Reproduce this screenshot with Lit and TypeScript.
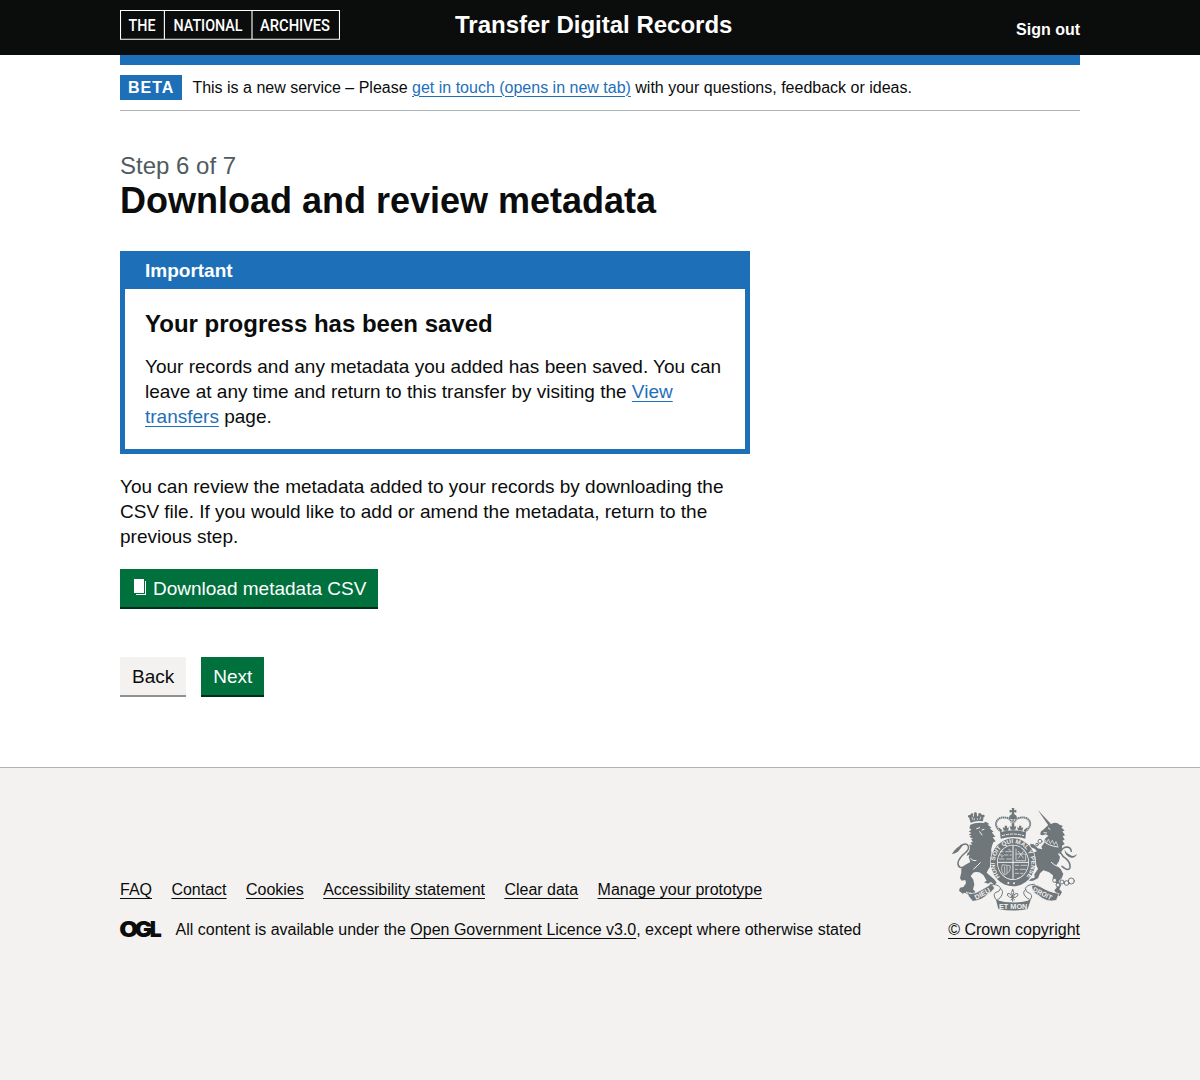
import { LitElement, html, css } from "lit";
import { customElement } from "lit/decorators.js";

const FOOTER_LINKS = [
  "FAQ",
  "Contact",
  "Cookies",
  "Accessibility statement",
  "Clear data",
  "Manage your prototype",
];

@customElement("archives-logo")
class ArchivesLogo extends LitElement {
  static styles = css`
    :host { display: block; width: 220px; height: 30px; }
    .logo { display: block; }
    .word {
      font-family: Roboto, "Liberation Sans", sans-serif;
      font-weight: 500;
      font-size: 16.5px;
      fill: #fff;
    }
    .frame { fill: none; stroke: #fff; stroke-width: 1.1; }
  `;

  render() {
    return html`<svg class="logo" width="220" height="30" viewBox="0 0 220 30" role="img" aria-label="The National Archives">
      <path class="frame" d="M.5 .5H219.5V29.3H.5ZM44.4 .5V29.3M132 .5V29.3" />
      <text class="word" x="8.5" y="21" textLength="27" lengthAdjust="spacingAndGlyphs">THE</text>
      <text class="word" x="53.5" y="21" textLength="69" lengthAdjust="spacingAndGlyphs">NATIONAL</text>
      <text class="word" x="140" y="21" textLength="70" lengthAdjust="spacingAndGlyphs">ARCHIVES</text>
    </svg>`;
  }
}

@customElement("royal-crest")
class RoyalCrest extends LitElement {
  static styles = css`
    :host { display: block; width: 145px; height: 115px; }
    .crest { display: block; }
    .solid { fill: #6f777b; }
    .paper { fill: #f3f2f1; }
    .line { fill: none; stroke: #6f777b; stroke-width: 4.5; stroke-linecap: round; stroke-linejoin: round; }
    .thin { stroke-width: 3; }
    .gap { fill: none; stroke: #f3f2f1; stroke-width: 3; stroke-linecap: round; }
    .fine { stroke-width: 2; }
    .motto { font-family: "Liberation Sans", Arial, sans-serif; font-weight: 700; fill: #f3f2f1; }
    .ribbon-text { font-size: 21px; }
    .garter-text { font-size: 18px; }
  `;

  render() {
    return html`<svg class="crest" width="145" height="115" viewBox="0 0 435 345" aria-hidden="true">
      <!-- lion -->
      <path class="solid" d="M92 68L86 48 94 43 101 51 104 38H109L112 50 119 41 131 46 129 64Q110 60 92 68Z" />
      <g class="solid">
        <circle cx="88" cy="49" r="4" /><circle cx="106" cy="41" r="4" /><circle cx="130" cy="48" r="4" />
        <circle cx="96" cy="44" r="4" /><circle cx="119" cy="43" r="4" />
        <path d="M91 74Q108 66 130 69L137 65 148 72 143 74 155 83 149 84 161 96 155 97 166 110 158 112 167 124 160 127 156 138Q151 150 155 164L152 190Q151 204 144 210L140 218 154 230 164 239 170 248 163 254 153 246 144 251 132 247 140 242 130 225 118 217Q105 214 100 218L92 228 100 239 103 254 99 268 106 275 101 284 90 277 83 283 74 278 68 281 57 272 60 263 70 261 78 250 76 240 65 242 60 235 64 216Q61 204 75 195L91 186 86 171 91 162 87 157 90 143 88 133 96 136 92 126 99 127 93 117 100 116 88 111 95 106 86 105 94 98 86 95 94 89 88 84Z" />
        <path d="M128 150Q112 156 95 151L83 158 80 168 88 164 91 175 99 165 111 168 125 165Z" />
        <path d="M36 162Q48 141 70 133Q62 147 55 154Q45 163 36 162Z" />
      </g>
      <path class="gap fine" d="M96 52L99 60M103 55V59M112 55V59M122 51L120 58" />
      <path class="line" d="M62 137Q80 126 85 139Q88 149 75 159Q57 174 54 188Q54 210 78 199" />
      <path class="gap" d="M110 86L119 83M126 90L132 88M119 95L126 105M101 207Q112 198 121 188M92 176Q98 184 108 182" />

      <!-- unicorn -->
      <g class="solid">
        <path d="M293 29L331 70 325 76Z" />
        <path d="M324 76L326 67 333 72Q349 64 359 74L369 78 364 82 374 92 367 94 375 106 368 109 374 119 367 122 374 132 366 137Q369 151 354 162L360 170 357 184 349 196 362 207 370 222 365 235 356 244 363 256 358 268 366 276 359 289 350 282 343 271 350 263 348 250 338 238 339 226 326 216 310 211 300 220 294 235 279 242 267 243 272 236 284 233 283 223 294 207 289 196 286 177 280 166 275 158 268 159 266 148 276 149 282 157 291 154 284 146 271 141 271 131 281 133 293 145 307 148 304 140 312 130 314 117 325 107 316 103 309 106 301 104 302 95 313 86Z" />
        <path d="M373 150Q380 161 392 166Q400 171 411 162Q405 175 394 173Q376 170 373 150Z" />
      </g>
      <path class="line" d="M360 160Q366 142 380 141Q392 141 394 154M363 160Q368 170 378 176Q392 188 390 203Q385 216 366 199" />
      <path class="gap" d="M312 98L320 99M325 84L330 88M310 123Q326 138 354 141M352 199Q342 195 334 187" />
      <path class="gap fine" d="M313 117L320 128 325 118 331 131 337 121 343 134 348 125 353 137" />
      <g class="line thin">
        <circle cx="300" cy="124" r="6" /><circle cx="291" cy="134" r="4" />
        <circle class="paper" cx="344" cy="241" r="6" /><circle class="paper" cx="354" cy="255" r="6" />
        <circle cx="366" cy="246" r="6" /><circle cx="380" cy="249" r="7" /><circle cx="394" cy="243" r="9" />
      </g>

      <!-- garter and shield -->
      <ellipse class="paper" cx="219" cy="187" rx="69" ry="75" />
      <ellipse class="solid" cx="219" cy="187" rx="67" ry="72" />
      <ellipse class="paper" cx="219" cy="187" rx="48" ry="53" />
      <ellipse class="solid" cx="219" cy="187" rx="45.5" ry="50.5" />
      <path class="gap" d="M219 137V237M174 187H264" />
      <path class="gap fine" d="M181 155H189M197 155H214M178 165H186M194 165H204M210 165H214M178 177H192M200 177H214M228 147V182H257V162H228M235 154L250 174M250 154L235 174M226 196H236M243 196H261M226 208H232M240 208H257M226 220H236M242 220H249M187 195Q180 212 193 225Q212 218 211 199ZM194 200V220M201 200V219M184 171L190 167M206 148L211 151" />
      <defs>
        <path id="garter" d="M180 231A54.5 59.5 0 1 1 258 231" />
      </defs>
      <text class="motto garter-text" textLength="268" lengthAdjust="spacingAndGlyphs"><textPath href="#garter">HONI SOIT QUI MAL Y PENSE</textPath></text>
      <circle class="paper" cx="205" cy="249" r="3" /><circle class="paper" cx="222" cy="250" r="3" />

      <!-- crown -->
      <path class="paper" d="M180 116L181 99Q165 88 166 70Q171 48 193 50Q212 49 219 60Q227 48 248 50Q269 53 273 73Q271 88 259 99V116Q219 107 180 116Z" />
      <path class="solid" d="M180 97Q219 84 258 97L256 116Q219 106 182 116Z" />
      <path class="gap" d="M187 107Q219 97 251 107" stroke-dasharray="7 5" />
      <g fill="none" stroke="#6f777b" stroke-width="6" stroke-dasharray="4.5 1.5" >
        <path d="M184 95Q161 80 171 62Q181 48 203 54Q211 57 215 67" />
        <path d="M254 95Q277 80 268 62Q257 48 236 54Q227 57 223 67" />
      </g>
      <path class="solid" d="M215 24H223L222 31 229 29V38L222 36 223 43Q234 48 229 57H209Q204 48 215 43L216 36 209 38V29L216 31Z" />
      <path class="line" d="M219 58V89" stroke-dasharray="5 5" />
      <path class="solid" d="M191 92L188 82 194 84 194 77H201V84L207 82 204 92ZM212 89L209 78 215 80 215 70H223V80L229 78 226 89ZM234 91L231 82 237 84 237 77H244V84L250 82 247 92Z" />
      <path class="solid" d="M176 82L187 91 181 97ZM262 82L251 91 257 97Z" />

      <!-- mottoes -->
      <path d="M79 276Q91 285 108 278Q139 263 151 253Q162 254 163 265Q157 276 143 282Q126 302 98 304Q86 291 79 276Z" fill="#6f777b" stroke="#f3f2f1" stroke-width="2" />
      <path class="line thin" d="M151 253Q172 251 182 264Q178 277 168 277Q159 281 165 294Q173 307 178 305M181 265Q193 273 184 288Q179 297 173 299" />
      <path class="solid" d="M168 300Q220 315 272 300L263 327Q220 336 175 327Z" />
      <path class="line thin" d="M284 253Q263 252 256 265Q257 277 269 280Q279 285 272 297Q267 305 262 305M257 268Q246 276 255 288Q262 296 268 298" />
      <path d="M275 257Q286 251 301 260Q326 276 357 281L349 301Q320 309 294 285Q276 279 275 257Z" fill="#6f777b" stroke="#f3f2f1" stroke-width="2" />
      <text class="motto ribbon-text" transform="translate(109 300) rotate(-30)" textLength="50" lengthAdjust="spacingAndGlyphs">DIEU</text>
      <text class="motto ribbon-text" x="177" y="325.500" textLength="85" lengthAdjust="spacingAndGlyphs">ET MON</text>
      <text class="motto ribbon-text" transform="translate(277 273) rotate(27)" textLength="61" lengthAdjust="spacingAndGlyphs">DROIT</text>

      <!-- fleur-de-lis -->
      <path class="line thin" d="M218 268Q211 278 218 288Q225 278 218 268M210 292H227M215 290Q213 278 203 281Q199 287 207 290M221 290Q223 278 233 281Q237 287 229 290M218 289V304M213 300L218 294 224 300" />
    </svg>`;
  }
}

@customElement("app-root")
class AppRoot extends LitElement {
  static styles = css`
    :host {
      display: flex;
      flex-direction: column;
      min-height: 1080px;
      background: #f3f2f1;
      color: #0b0c0c;
      font-family: "Liberation Sans", Arial, sans-serif;
      font-size: 19px;
      line-height: 25px;
      -webkit-font-smoothing: antialiased;
    }
    * { box-sizing: border-box; }
    h1, h2, p, ul { margin: 0; padding: 0; font-weight: 400; }
    a { color: inherit; text-decoration: underline; text-decoration-thickness: 1px; text-underline-offset: 0.1578em; }
    .container { width: 960px; margin: 0 auto; }
    .header { background: #0b0c0c; color: #fff; height: 55px; }
    .header-row { display: grid; grid-template-columns: 335px 1fr auto; align-items: start; padding-top: 10px; }
    .service { font-size: 24px; line-height: 30px; font-weight: 700; }
    .sign-out { font-size: 16px; line-height: 20px; font-weight: 700; text-decoration: none; padding-top: 10px; }
    .page { background: #fff; height: 712px; }
    .bar { height: 10px; background: #1d70b8; }
    .phase { display: flex; align-items: center; gap: 10.4px; padding: 10px 0; border-bottom: 1px solid #b1b4b6; font-size: 16px; line-height: 20px; }
    .tag { background: #1d70b8; color: #fff; font-weight: 700; letter-spacing: 1px; line-height: 16px; padding: 5px 8px 4px; height: 25px; width: 62px; }
    .blue { color: #1d70b8; }
    .main { padding-top: 40px; width: 630px; }
    .caption { display: block; font-size: 24px; line-height: 30px; font-weight: 400; color: #505a5f; }
    .title { font-size: 36px; line-height: 40px; font-weight: 700; margin-bottom: 30px; }
    .banner { border: 5px solid #1d70b8; margin-bottom: 20px; }
    .banner-title { background: #1d70b8; color: #fff; font-size: 19px; line-height: 25px; font-weight: 700; padding: 2px 20px 6px; }
    .banner-content { padding: 20px; }
    .banner-heading { font-size: 24px; line-height: 30px; font-weight: 700; margin-bottom: 15px; }
    .button {
      display: inline-flex; align-items: center; height: 38px; padding: 0 12px;
      border: 0; background: #00703c; color: #fff; box-shadow: 0 2px 0 #002d18;
      font: inherit; line-height: 19px;
    }
    .secondary { background: #f3f2f1; color: #0b0c0c; box-shadow: 0 2px 0 #929191; }
    .download { margin-top: 20px; }
    .doc { margin: 0 5px 3px 2px; }
    .actions { display: flex; gap: 15px; margin-top: 50px; }
    .footer { border-top: 1px solid #b1b4b6; padding-top: 40px; font-size: 16px; line-height: 20px; }
    .footer-row { display: flex; justify-content: space-between; align-items: flex-end; }
    .links { display: flex; gap: 19.4px; list-style: none; margin-bottom: 20px; }
    .licence { display: flex; align-items: center; gap: 14.5px; }
    .ogl { display: block; overflow: visible; }
    .ogl-text { font-family: Inter, "Liberation Sans", sans-serif; font-weight: 900; font-size: 22px; fill: #0b0c0c; }
    .copyright { display: flex; flex-direction: column; align-items: flex-end; }
    .crest { margin: -8px -5px -4px 0; }
    .crown-link { margin-top: 9px; }
  `;

  render() {
    return html`
      <header class="header">
        <div class="container header-row">
          <archives-logo></archives-logo>
          <span class="service">Transfer Digital Records</span>
          <a class="sign-out">Sign out</a>
        </div>
      </header>
      <div class="page">
        <div class="container">
          <div class="bar"></div>
          <div class="phase">
            <strong class="tag">BETA</strong>
            <span>This is a new service – Please <a class="blue">get in touch (opens in new tab)</a> with your questions, feedback or ideas.</span>
          </div>
          <main class="main">
            <h1 class="title"><span class="caption">Step 6 of 7</span>Download and review metadata</h1>
            <section class="banner">
              <h2 class="banner-title">Important</h2>
              <div class="banner-content">
                <p class="banner-heading">Your progress has been saved</p>
                <p>Your records and any metadata you added has been saved. You can leave at any time and return to this transfer by visiting the <a class="blue">View transfers</a> page.</p>
              </div>
            </section>
            <p>You can review the metadata added to your records by downloading the CSV file. If you would like to add or amend the metadata, return to the previous step.</p>
            <button class="button download">
              <svg class="doc" width="14" height="16" viewBox="0 0 14 16" aria-hidden="true">
                <path fill="#fff" d="M0 0H10V14H0ZM11 2H12V16H2V15H11Z" />
              </svg>Download metadata CSV
            </button>
            <div class="actions">
              <button class="button secondary">Back</button>
              <button class="button">Next</button>
            </div>
          </main>
        </div>
      </div>
      <footer class="footer">
        <div class="container footer-row">
          <div>
            <ul class="links">
              ${FOOTER_LINKS.map((label) => html`<li><a>${label}</a></li>`)}
            </ul>
            <div class="licence">
              <svg class="ogl" width="41" height="20" viewBox="0 0 41 20" role="img" aria-label="Open Government Licence">
                <text class="ogl-text" y="17"><tspan x="-0.800" textLength="19" lengthAdjust="spacingAndGlyphs">O</tspan><tspan x="14.500" textLength="18" lengthAdjust="spacingAndGlyphs">G</tspan><tspan x="29.800" textLength="12" lengthAdjust="spacingAndGlyphs">L</tspan></text>
              </svg>
              <span>All content is available under the <a>Open Government Licence v3.0</a>, except where otherwise stated</span>
            </div>
          </div>
          <div class="copyright">
            <royal-crest class="crest"></royal-crest>
            <a class="crown-link">© Crown copyright</a>
          </div>
        </div>
      </footer>
    `;
  }
}
